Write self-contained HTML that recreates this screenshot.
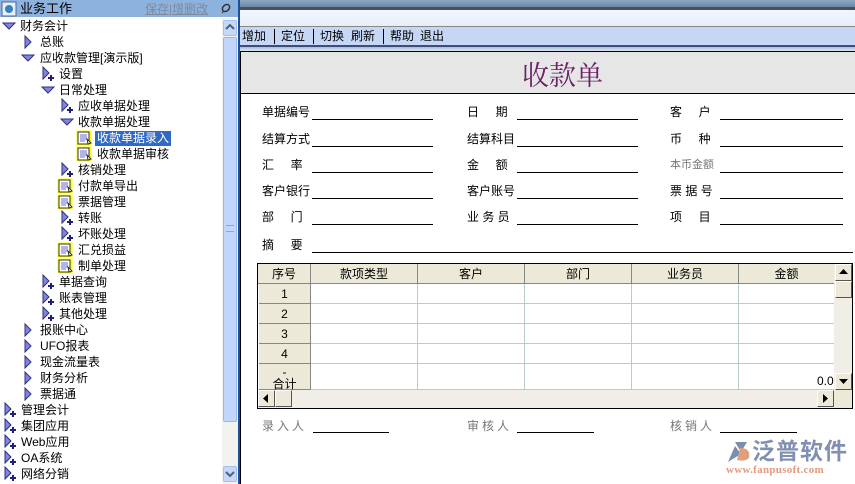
<!DOCTYPE html>
<html><head><meta charset="utf-8">
<style>
*{margin:0;padding:0;box-sizing:border-box}
body{width:855px;height:484px;overflow:hidden;background:#fff;position:relative;font-family:"Liberation Sans","WenQuanYi Zen Hei","Noto Sans CJK SC",sans-serif;font-size:12px;color:#000}
.a{position:absolute;white-space:nowrap}
.it{position:absolute;height:16px;line-height:16px;font-size:12px;margin-top:1px}
.ic{position:absolute;width:16px;height:16px;margin-top:1px}
.lbl{position:absolute;font-size:12px;line-height:14px}
.ln{position:absolute;height:1px;background:#000}
.th{position:absolute;top:264px;height:20px;line-height:20px;text-align:center;background:#ece9d8;border-right:1px solid #888;border-bottom:1px solid #888}
.rn{position:absolute;left:259px;width:52px;text-align:center;background:#ece9d8;border-right:1px solid #888;border-bottom:1px solid #888}
.hl{position:absolute;left:311px;width:523px;height:1px;background:#b4cec8}
.vl{position:absolute;top:284px;height:106px;width:1px;background:#b4cec8}
.g{color:#777}
.tb{position:absolute;top:28px;font-size:12px;line-height:16px}
.sep{position:absolute;top:29px;width:1px;height:15px;background:#000}
</style></head><body>
<!-- left panel -->
<div class="a" style="left:0;top:0;width:238px;height:17px;background:#8eb2de"></div>
<svg class="a" style="left:1px;top:1px" width="16" height="16"><rect x="1" y="1" width="14" height="14" fill="#e8eef8" stroke="#4a6a9a"/><circle cx="8" cy="8" r="4" fill="#3a80c0"/></svg>
<div class="a" style="left:20px;top:1px;font-size:13px;line-height:16px">业务工作</div>
<div class="a" style="left:145px;top:2px;font-size:12px;line-height:14px;color:#7f8aa0;text-decoration:underline">保存|增删改</div>
<svg class="a" style="left:219px;top:2px" width="14" height="13"><ellipse cx="7" cy="6" rx="4" ry="3" fill="none" stroke="#333" stroke-width="1.5" transform="rotate(-40 7 6)"/><line x1="3" y1="11" x2="5" y2="9" stroke="#333"/></svg>
<div class="a" style="left:238px;top:0;width:2px;height:484px;background:#1e4f9a"></div>
<!-- scrollbar -->
<div class="a" style="left:222px;top:18px;width:16px;height:466px;background:#f2f2ee"></div>
<div class="a" style="left:223px;top:20px;width:14px;height:16px;background:#c6d8f8;border:1px solid #a8c0e8;border-radius:2px"></div>
<svg class="a" style="left:225px;top:23px" width="10" height="8"><path d="M1 6 L5 2 L9 6" fill="none" stroke="#4d6185" stroke-width="2"/></svg>
<div class="a" style="left:223px;top:37px;width:14px;height:385px;background:#c2d6fb;border:1px solid #9cb6e6;border-radius:2px"></div>
<div class="a" style="left:226px;top:225px;width:8px;height:7px;border-top:1px solid #8aa6d8;border-bottom:1px solid #8aa6d8"></div>
<div class="a" style="left:223px;top:466px;width:14px;height:16px;background:#c6d8f8;border:1px solid #a8c0e8;border-radius:2px"></div>
<svg class="a" style="left:225px;top:470px" width="10" height="8"><path d="M1 2 L5 6 L9 2" fill="none" stroke="#4d6185" stroke-width="2"/></svg>

<svg width="0" height="0" style="position:absolute">
<defs>
<symbol id="dn" viewBox="0 0 16 16"><path d="M2 5 L14 5 L8 11 Z" fill="#7f86e0" stroke="#30307a"/></symbol>
<symbol id="tr" viewBox="0 0 16 16"><path d="M5 2 L11 8 L5 14 Z" fill="#7f86e0" stroke="#30307a"/></symbol>
<symbol id="tp" viewBox="0 0 16 16"><path d="M3 1 L9 7 L3 13 Z" fill="#7f86e0" stroke="#30307a"/><path d="M11 9 V15 M8 12 H14" stroke="#20207a" stroke-width="2"/></symbol>
<symbol id="dc" viewBox="0 0 16 16"><rect x="0.5" y="0.5" width="15" height="15" fill="#ffff00"/><rect x="2" y="2" width="11" height="12" fill="#fff" stroke="#333"/><path d="M4 5H11M4 7H11M4 9H11M4 11H9" stroke="#6a6ad0"/><path d="M11 9 L15 13 L12 14 Z" fill="#fff" stroke="#333"/></symbol>
</defs></svg>

<div class="it" style="top:17px;left:20px">财务会计</div><svg class="ic" style="top:17px;left:1px"><use href="#dn"/></svg>
<div class="it" style="top:33px;left:40px">总账</div><svg class="ic" style="top:33px;left:20px"><use href="#tr"/></svg>
<div class="it" style="top:49px;left:40px">应收款管理[演示版]</div><svg class="ic" style="top:49px;left:20px"><use href="#dn"/></svg>
<div class="it" style="top:65px;left:59px">设置</div><svg class="ic" style="top:65px;left:40px"><use href="#tp"/></svg>
<div class="it" style="top:81px;left:59px">日常处理</div><svg class="ic" style="top:81px;left:40px"><use href="#dn"/></svg>
<div class="it" style="top:97px;left:78px">应收单据处理</div><svg class="ic" style="top:97px;left:59px"><use href="#tp"/></svg>
<div class="it" style="top:113px;left:78px">收款单据处理</div><svg class="ic" style="top:113px;left:59px"><use href="#dn"/></svg>
<div class="it" style="top:130px;left:95px;background:#316ac5;color:#fff;padding:0 2px;height:15px;line-height:15px">收款单据录入</div><svg class="ic" style="top:129px;left:76px"><use href="#dc"/></svg>
<div class="it" style="top:145px;left:97px">收款单据审核</div><svg class="ic" style="top:145px;left:76px"><use href="#dc"/></svg>
<div class="it" style="top:161px;left:78px">核销处理</div><svg class="ic" style="top:161px;left:59px"><use href="#tp"/></svg>
<div class="it" style="top:177px;left:78px">付款单导出</div><svg class="ic" style="top:177px;left:57px"><use href="#dc"/></svg>
<div class="it" style="top:193px;left:78px">票据管理</div><svg class="ic" style="top:193px;left:57px"><use href="#dc"/></svg>
<div class="it" style="top:209px;left:78px">转账</div><svg class="ic" style="top:209px;left:59px"><use href="#tp"/></svg>
<div class="it" style="top:225px;left:78px">坏账处理</div><svg class="ic" style="top:225px;left:59px"><use href="#tp"/></svg>
<div class="it" style="top:241px;left:78px">汇兑损益</div><svg class="ic" style="top:241px;left:57px"><use href="#dc"/></svg>
<div class="it" style="top:257px;left:78px">制单处理</div><svg class="ic" style="top:257px;left:57px"><use href="#dc"/></svg>
<div class="it" style="top:273px;left:59px">单据查询</div><svg class="ic" style="top:273px;left:40px"><use href="#tp"/></svg>
<div class="it" style="top:289px;left:59px">账表管理</div><svg class="ic" style="top:289px;left:40px"><use href="#tp"/></svg>
<div class="it" style="top:305px;left:59px">其他处理</div><svg class="ic" style="top:305px;left:40px"><use href="#tp"/></svg>
<div class="it" style="top:321px;left:40px">报账中心</div><svg class="ic" style="top:321px;left:20px"><use href="#tr"/></svg>
<div class="it" style="top:337px;left:40px">UFO报表</div><svg class="ic" style="top:337px;left:20px"><use href="#tr"/></svg>
<div class="it" style="top:353px;left:40px">现金流量表</div><svg class="ic" style="top:353px;left:20px"><use href="#tr"/></svg>
<div class="it" style="top:369px;left:40px">财务分析</div><svg class="ic" style="top:369px;left:20px"><use href="#tr"/></svg>
<div class="it" style="top:385px;left:40px">票据通</div><svg class="ic" style="top:385px;left:20px"><use href="#tr"/></svg>
<div class="it" style="top:401px;left:21px">管理会计</div><svg class="ic" style="top:401px;left:2px"><use href="#tp"/></svg>
<div class="it" style="top:417px;left:21px">集团应用</div><svg class="ic" style="top:417px;left:2px"><use href="#tp"/></svg>
<div class="it" style="top:433px;left:21px">Web应用</div><svg class="ic" style="top:433px;left:2px"><use href="#tp"/></svg>
<div class="it" style="top:449px;left:21px">OA系统</div><svg class="ic" style="top:449px;left:2px"><use href="#tp"/></svg>
<div class="it" style="top:465px;left:21px">网络分销</div><svg class="ic" style="top:465px;left:2px"><use href="#tp"/></svg>

<!-- right top -->
<div class="a" style="left:240px;top:0;width:615px;height:7px;background:linear-gradient(#8fa8c4,#6d86a4)"></div>
<div class="a" style="left:240px;top:7px;width:615px;height:3px;background:#4a4f58"></div>
<div class="a" style="left:240px;top:10px;width:615px;height:16px;background:linear-gradient(#f0f6ff,#e8eef8)"></div>
<div class="a" style="left:240px;top:26px;width:615px;height:1px;background:#888"></div>
<div class="a" style="left:240px;top:27px;width:615px;height:18px;background:#c6d7f5"></div>
<div class="tb" style="left:242px">增加</div><div class="sep" style="left:274px"></div>
<div class="tb" style="left:281px">定位</div><div class="sep" style="left:313px"></div>
<div class="tb" style="left:320px">切换</div><div class="tb" style="left:351px">刷新</div><div class="sep" style="left:383px"></div>
<div class="tb" style="left:390px">帮助</div><div class="tb" style="left:420px">退出</div>
<div class="a" style="left:240px;top:45px;width:615px;height:2px;background:#3c4e78"></div>
<div class="a" style="left:240px;top:47px;width:615px;height:4px;background:linear-gradient(#a8bcd8,#dde6f2)"></div>
<!-- form -->
<div class="a" style="left:240px;top:51px;width:615px;height:433px;border:1px solid #000;border-right:none;border-bottom:none"></div>
<div class="a" style="left:241px;top:52px;width:614px;height:42px;background:#e6e6e6;border-bottom:1px solid #000"></div>
<div class="a" style="left:522px;top:57px;font-size:27px;line-height:34px;color:#6c1e66;font-family:'Noto Serif CJK SC',serif">收款单</div>

<div class="lbl" style="left:262px;top:105px">单据编号</div><div class="ln" style="left:312px;top:119px;width:121px"></div>
<div class="lbl" style="left:467px;top:105px">日&nbsp;&nbsp;&nbsp;&nbsp;&nbsp;期</div><div class="ln" style="left:517px;top:119px;width:121px"></div>
<div class="lbl" style="left:670px;top:105px">客&nbsp;&nbsp;&nbsp;&nbsp;&nbsp;户</div><div class="ln" style="left:720px;top:119px;width:123px"></div>
<div class="lbl" style="left:262px;top:132px">结算方式</div><div class="ln" style="left:312px;top:146px;width:121px"></div>
<div class="lbl" style="left:467px;top:132px">结算科目</div><div class="ln" style="left:517px;top:146px;width:121px"></div>
<div class="lbl" style="left:670px;top:132px">币&nbsp;&nbsp;&nbsp;&nbsp;&nbsp;种</div><div class="ln" style="left:720px;top:146px;width:123px"></div>
<div class="lbl" style="left:262px;top:158px">汇&nbsp;&nbsp;&nbsp;&nbsp;&nbsp;率</div><div class="ln" style="left:312px;top:172px;width:121px"></div>
<div class="lbl" style="left:467px;top:158px">金&nbsp;&nbsp;&nbsp;&nbsp;&nbsp;额</div><div class="ln" style="left:517px;top:172px;width:121px"></div>
<div class="lbl g" style="left:670px;top:158px;font-size:11px">本币金额</div><div class="ln" style="left:720px;top:172px;width:123px"></div>
<div class="lbl" style="left:262px;top:184px">客户银行</div><div class="ln" style="left:312px;top:198px;width:121px"></div>
<div class="lbl" style="left:467px;top:184px">客户账号</div><div class="ln" style="left:517px;top:198px;width:121px"></div>
<div class="lbl" style="left:670px;top:184px">票&nbsp;据&nbsp;号</div><div class="ln" style="left:720px;top:198px;width:123px"></div>
<div class="lbl" style="left:262px;top:210px">部&nbsp;&nbsp;&nbsp;&nbsp;&nbsp;门</div><div class="ln" style="left:312px;top:224px;width:121px"></div>
<div class="lbl" style="left:467px;top:210px">业&nbsp;务&nbsp;员</div><div class="ln" style="left:517px;top:224px;width:121px"></div>
<div class="lbl" style="left:670px;top:210px">项&nbsp;&nbsp;&nbsp;&nbsp;&nbsp;目</div><div class="ln" style="left:720px;top:224px;width:123px"></div>
<div class="lbl" style="left:262px;top:238px">摘&nbsp;&nbsp;&nbsp;&nbsp;&nbsp;要</div><div class="ln" style="left:312px;top:252px;width:541px"></div>

<!-- table -->
<div class="a" style="left:257px;top:263px;width:596px;height:146px;border:1px solid #000;background:#fff"></div>
<div class="th" style="left:258px;width:53px">序号</div>
<div class="th" style="left:311px;width:107px">款项类型</div>
<div class="th" style="left:418px;width:107px">客户</div>
<div class="th" style="left:525px;width:107px">部门</div>
<div class="th" style="left:632px;width:107px">业务员</div>
<div class="th" style="left:739px;width:95px;border-right:none">金额</div>
<div class="rn" style="top:284px;height:20px;line-height:20px">1</div>
<div class="rn" style="top:304px;height:20px;line-height:20px">2</div>
<div class="rn" style="top:324px;height:20px;line-height:20px">3</div>
<div class="rn" style="top:344px;height:20px;line-height:20px">4</div>
<div class="rn" style="top:364px;height:26px;line-height:12px;padding-top:2px">-<br>合计</div>
<div class="hl" style="top:303px"></div><div class="hl" style="top:323px"></div><div class="hl" style="top:343px"></div><div class="hl" style="top:363px"></div><div class="hl" style="top:389px"></div>
<div class="vl" style="left:417px"></div><div class="vl" style="left:524px"></div><div class="vl" style="left:631px"></div><div class="vl" style="left:738px"></div>
<div class="a" style="left:817px;top:374px;font-size:12px">0.0</div>
<!-- v scrollbar -->
<div class="a" style="left:834px;top:264px;width:18px;height:126px;background:#f0eee6"></div>
<div class="a" style="left:835px;top:264px;width:17px;height:17px;background:#ece9d8;border:1px solid;border-color:#fff #555 #555 #fff"></div>
<svg class="a" style="left:839px;top:269px" width="9" height="6"><path d="M0 5 L4.5 0 L9 5Z" fill="#000"/></svg>
<div class="a" style="left:835px;top:281px;width:17px;height:17px;background:#ece9d8;border:1px solid;border-color:#fff #555 #555 #fff"></div>
<div class="a" style="left:835px;top:373px;width:17px;height:17px;background:#ece9d8;border:1px solid;border-color:#fff #555 #555 #fff"></div>
<svg class="a" style="left:839px;top:379px" width="9" height="6"><path d="M0 0 L4.5 5 L9 0Z" fill="#000"/></svg>
<!-- h scrollbar -->
<div class="a" style="left:258px;top:390px;width:576px;height:18px;background:#f0eee6"></div>
<div class="a" style="left:258px;top:390px;width:17px;height:17px;background:#ece9d8;border:1px solid;border-color:#fff #555 #555 #fff"></div>
<svg class="a" style="left:263px;top:394px" width="6" height="9"><path d="M5 0 L0 4.5 L5 9Z" fill="#000"/></svg>
<div class="a" style="left:275px;top:390px;width:17px;height:17px;background:#ece9d8;border:1px solid;border-color:#fff #555 #555 #fff"></div>
<div class="a" style="left:817px;top:390px;width:17px;height:17px;background:#ece9d8;border:1px solid;border-color:#fff #555 #555 #fff"></div>
<svg class="a" style="left:823px;top:394px" width="6" height="9"><path d="M0 0 L5 4.5 L0 9Z" fill="#000"/></svg>
<div class="a" style="left:834px;top:390px;width:18px;height:18px;background:#ece9d8"></div>

<!-- footer -->
<div class="lbl g" style="left:262px;top:419px;letter-spacing:3px">录入人</div><div class="ln" style="left:313px;top:432px;width:76px"></div>
<div class="lbl g" style="left:467px;top:419px;letter-spacing:3px">审核人</div><div class="ln" style="left:517px;top:432px;width:77px"></div>
<div class="lbl g" style="left:670px;top:419px;letter-spacing:3px">核销人</div><div class="ln" style="left:720px;top:432px;width:77px"></div>
<!-- logo -->
<svg class="a" style="left:725px;top:440px" width="28" height="24"><path d="M10 2 L22 2 L16 12 Z" fill="#7d8db0"/><path d="M3 22 L10 6 L16 14 Z" fill="#7d8db0"/><path d="M15 8 Q26 8 24 18 Q20 22 12 20 Z" fill="#e0a080"/></svg>
<div class="a" style="left:752px;top:437px;font-size:23px;line-height:28px;color:#8090b0;font-weight:bold;letter-spacing:1px">泛普软件</div>
<div class="a" style="left:726px;top:464px;font-size:11px;line-height:12px;color:#e09a80;font-family:'Liberation Serif',serif;font-weight:bold;letter-spacing:0.3px">www.fanpusoft.com</div>
</body></html>
